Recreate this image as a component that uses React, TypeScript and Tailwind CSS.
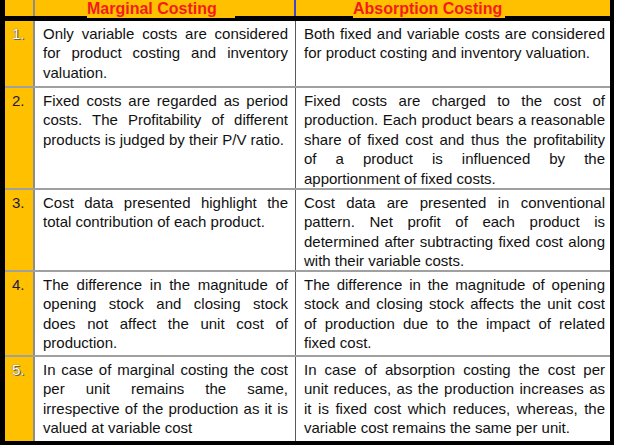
import React from "react";

const rows = [
  {
    n: "1.",
    light: true,
    h: "h-[67px]",
    a: "Only variable costs are considered for product costing and inventory valuation.",
    b: "Both fixed and variable costs are considered for product costing and inventory valuation.",
  },
  {
    n: "2.",
    light: false,
    h: "h-[102px]",
    a: "Fixed costs are regarded as period costs. The Profitability of different products is judged by their P/V ratio.",
    b: "Fixed costs are charged to the cost of production. Each product bears a reasonable share of fixed cost and thus the profitability of\u00a0a product is influenced by the apportionment of fixed costs.",
  },
  {
    n: "3.",
    light: false,
    h: "h-[82px]",
    a: "Cost data presented highlight the total contribution of each product.",
    b: "Cost data are presented in conventional pattern. Net profit of each product is determined after subtracting fixed cost along with their variable costs.",
  },
  {
    n: "4.",
    light: false,
    h: "h-[85px]",
    a: "The difference in the magnitude of opening stock and closing stock does not affect the unit cost of production.",
    b: "The difference in the magnitude of opening stock and closing stock affects the unit cost of production due to the impact of related fixed cost.",
  },
  {
    n: "5.",
    light: true,
    h: "h-[84px]",
    a: "In case of marginal costing the cost per unit remains the same, irrespective of the production as it is valued at variable cost",
    b: "In case of absorption costing the cost per unit reduces, as the production increases as it is fixed cost which reduces, whereas, the variable cost remains the same per unit.",
  },
];

export default function App() {
  return (
    <div className="w-[627px] h-[446px] bg-white font-['Liberation_Sans',Arial,sans-serif]">
      <div className="w-[614px] border-l-[5px] border-r-[4px] border-b-[4px] border-black">
        {/* header */}
        <div className="flex h-[21px] border-b-[5px] border-black bg-[#ffc000]">
          <div className="w-[30px] border-r-2 border-[#8c8c8c]" />
          <div className="w-[261px] border-r-2 border-[#3f48cc] pl-[52px] text-[16px] font-bold leading-[17px] text-[#f21c1c]">
            <span className="inline-block h-[18px] w-[148px] bg-[#ffc000]">Marginal Costing</span>
          </div>
          <div className="flex-1 pl-[57px] text-[16px] font-bold leading-[17px] text-[#f21c1c]">
            <span className="inline-block h-[18px] w-[152px] bg-[#ffc000]">Absorption Costing</span>
          </div>
        </div>
        {rows.map((r, i) => (
          <div
            key={r.n}
            className={`flex ${r.h} ${i < rows.length - 1 ? "border-b-2 border-[#a0a0a0]" : ""}`}
          >
            <div className="w-[30px] border-r-2 border-[#8c8c8c] bg-[#ffc000] pl-[7px] pt-[3px] text-[15px] leading-[19.4px]">
              <span
                className={
                  r.light
                    ? "text-white [text-shadow:0_0_1px_#333,1px_1px_0_#666]"
                    : "text-[#1c1c3a]"
                }
              >
                {r.n}
              </span>
            </div>
            <div className="w-[261px] border-r border-[#5a5a5a] pl-[8px] pr-[7px] pt-[3px] text-justify text-[15px] leading-[19.4px] text-[#111111]">
              {r.a}
            </div>
            <div className="flex-1 pl-[8px] pr-[5px] pt-[3px] text-justify text-[15px] leading-[19.4px] text-[#111111]">
              {r.b}
            </div>
          </div>
        ))}
      </div>
    </div>
  );
}
